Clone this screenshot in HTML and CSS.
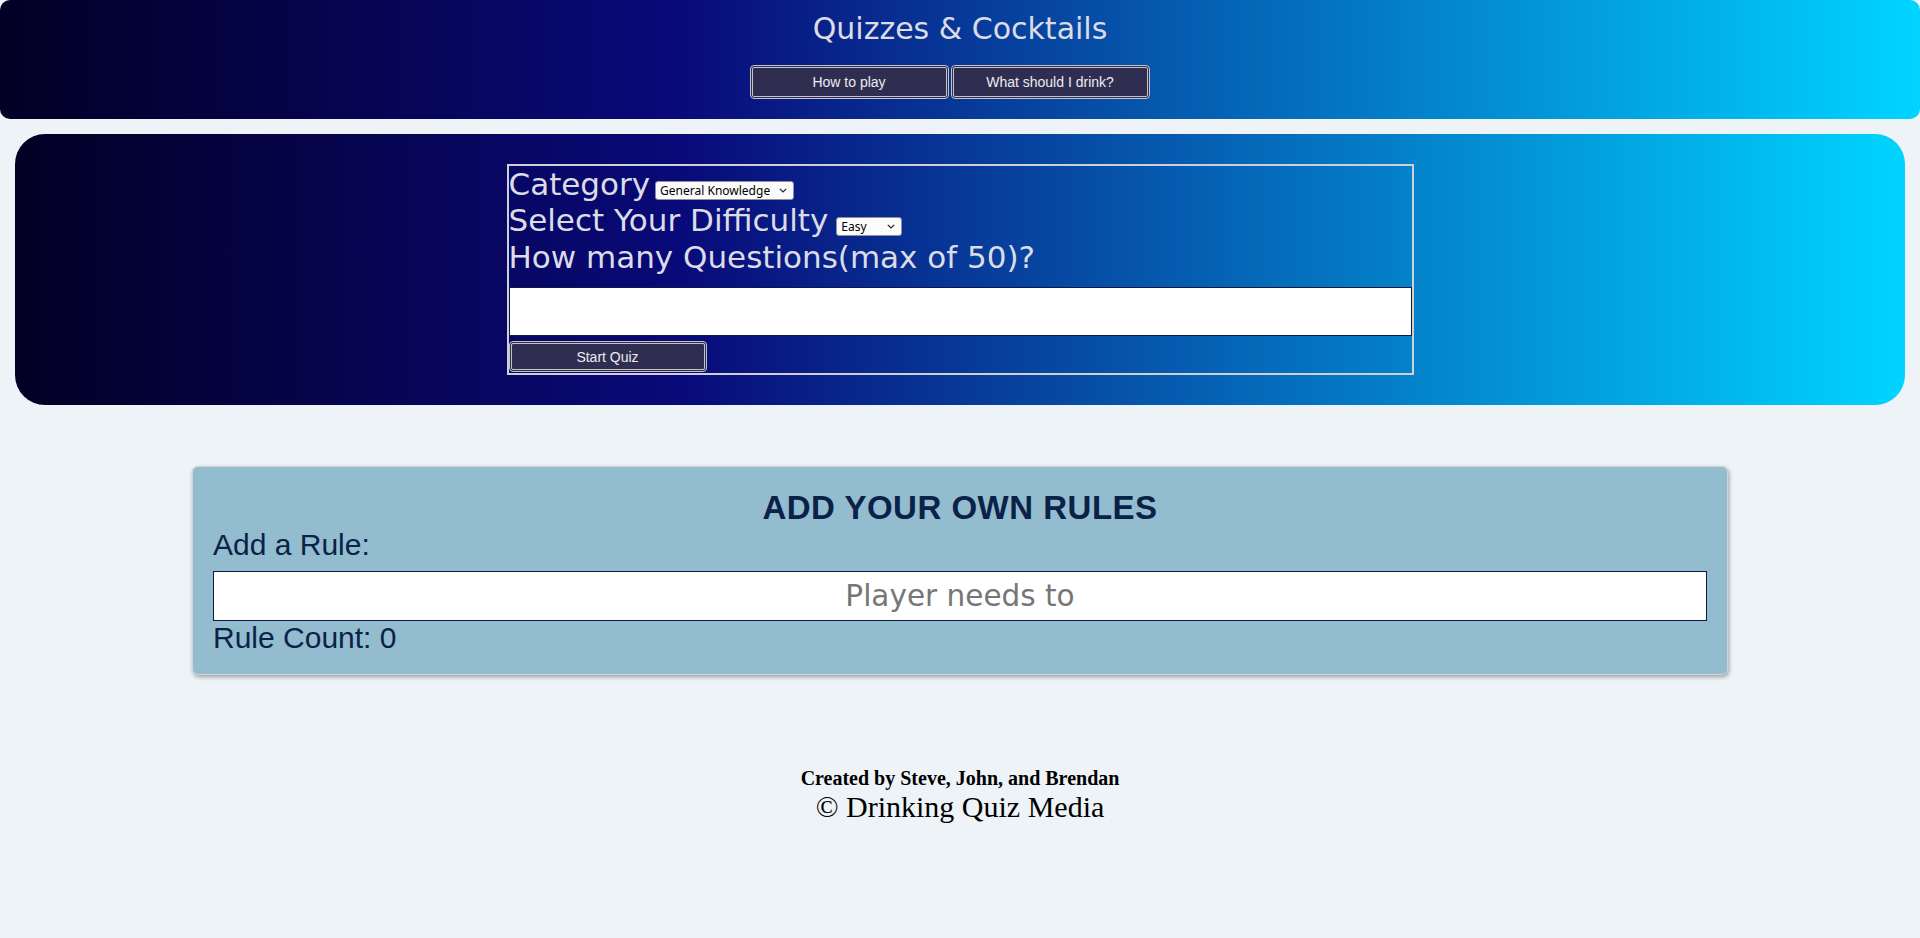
FILE: index.html
```html
<!DOCTYPE html>
<html lang="en">
<head>
<meta charset="utf-8">
<title>Quizzes &amp; Cocktails</title>
<link rel="stylesheet" href="styles.css">
</head>
<body>
<header class="site-header">
  <h1 class="site-title">Quizzes &amp; Cocktails</h1>
  <nav class="nav">
    <button class="btn nav-btn" type="button">How to play</button>
    <button class="btn nav-btn" type="button">What should I drink?</button>
  </nav>
</header>

<main>
  <section class="quiz-panel">
    <form class="quiz-form">
      <div class="row"><label for="cat">Category</label><span class="sel-wrap sel-wrap-cat"><select id="cat" class="sel sel-cat">
          <option>General Knowledge</option>
          <option>Books</option>
          <option>Film</option>
          <option>Music</option>
          <option>Sports</option>
        </select><svg class="chev" width="8" height="5" viewBox="0 0 8 5"><path d="M0.8 0.8 L4 4 L7.2 0.8" fill="none" stroke="#222" stroke-width="1.2"/></svg></span></div>
      <div class="row"><label for="diff">Select Your Difficulty</label><span class="sel-wrap sel-wrap-diff"><select id="diff" class="sel sel-diff">
          <option>Easy</option>
          <option>Medium</option>
          <option>Hard</option>
        </select><svg class="chev" width="8" height="5" viewBox="0 0 8 5"><path d="M0.8 0.8 L4 4 L7.2 0.8" fill="none" stroke="#222" stroke-width="1.2"/></svg></span></div>
      <div class="row row-q"><label for="qty">How many Questions(max of 50)?</label></div>
      <input id="qty" class="qty-input" type="text">
      <button class="btn start-btn" type="button">Start Quiz</button>
    </form>
  </section>

  <section class="rules-card">
    <h2 class="rules-title">ADD YOUR OWN RULES</h2>
    <label class="rules-label" for="rule">Add a Rule:</label>
    <input id="rule" class="rule-input" type="text" placeholder="Player needs to">
    <p class="rule-count">Rule Count: 0</p>
  </section>
</main>

<footer class="site-footer">
  <p class="credits">Created by Steve, John, and Brendan</p>
  <p class="copy">&copy; Drinking Quiz Media</p>
</footer>
</body>
</html>
```

FILE: styles.css
```css
* { box-sizing: border-box; }

body {
  margin: 0;
  background: #eef3f8;
  font-family: "Liberation Sans", Arial, sans-serif;
}

.site-header {
  background: linear-gradient(90deg, rgb(2, 0, 36) 0%, rgb(9, 9, 121) 35%, rgb(0, 212, 255) 100%);
  border-radius: 10px;
  padding: 12px 0 20px;
  text-align: center;
}

.site-title {
  margin: 0;
  font-family: "DejaVu Sans", sans-serif;
  font-weight: normal;
  font-size: 30px;
  line-height: 34px;
  color: #dcdce6;
}

.nav {
  margin-top: 19px;
  padding-right: 21px;
  display: flex;
  justify-content: center;
  gap: 2px;
}

.btn {
  background: #302e50;
  color: #ececf0;
  border: 3px double #c4c4c8;
  border-radius: 4px;
  font-family: "Liberation Sans", Arial, sans-serif;
  font-size: 14px;
  padding: 0;
  cursor: pointer;
}

.nav-btn {
  width: 199px;
  height: 34px;
}

.quiz-panel {
  margin: 15px 15px 0;
  padding: 30px 0 30px;
  border-radius: 30px;
  background: linear-gradient(90deg, rgb(2, 0, 36) 0%, rgb(9, 9, 121) 35%, rgb(0, 212, 255) 100%);
}

.quiz-form {
  width: 907px;
  margin: 0 auto;
  border: 2px solid #d0d0d4;
  padding: 0 0 1px;
  font-family: "DejaVu Sans", sans-serif;
  color: #dcdce6;
}

.row {
  font-size: 31px;
  line-height: 36px;
  white-space: nowrap;
}

.row-q { margin-top: 1px; }

.sel-wrap {
  position: relative;
  display: inline-block;
  vertical-align: baseline;
  font-size: 12px;
  line-height: 19px;
}

.sel-wrap-cat { margin-left: 5px; }
.sel-wrap-diff { margin-left: 8px; }

.sel {
  appearance: none;
  -webkit-appearance: none;
  display: block;
  font-family: "Noto Sans", "DejaVu Sans", sans-serif;
  font-size: 12px;
  height: 19px;
  padding: 0 16px 0 4px;
  background-color: #fbfbfb;
  color: #000;
  border: 1px solid #8f8f9d;
  border-radius: 3px;
}

.sel-cat { width: 139px; }
.sel-diff { width: 66px; }

.chev {
  position: absolute;
  right: 7px;
  top: 7px;
  pointer-events: none;
}

.qty-input {
  display: block;
  width: 100%;
  height: 49px;
  margin-top: 12px;
  border: 1px solid #0a1a44;
  background: #fff;
  font-size: 20px;
}

.start-btn {
  display: block;
  width: 198px;
  height: 31px;
  margin-top: 5px;
}

.rules-card {
  width: 80%;
  margin: 61px auto 0;
  padding: 22px 20px 19px;
  background: #93bccf;
  border: 1px solid #d2d6da;
  border-radius: 6px;
  box-shadow: 1px 2px 4px rgba(0, 0, 0, 0.35);
  color: #0b2248;
}

.rules-title {
  margin: 0;
  text-align: center;
  font-size: 33px;
  line-height: 37px;
  letter-spacing: 0.5px;
  font-weight: bold;
}

.rules-label {
  display: block;
  margin-top: 2px;
  font-size: 30px;
  line-height: 34px;
}

.rule-input {
  display: block;
  width: 100%;
  height: 50px;
  margin-top: 9px;
  border: 1px solid #0a1a44;
  background: #fff;
  text-align: center;
  font-family: "DejaVu Sans", sans-serif;
  font-size: 29.5px;
  color: #333;
}

.rule-input::placeholder { color: #767676; }

.rule-count {
  margin: 0;
  font-size: 30px;
  line-height: 34px;
}

.site-footer {
  margin-top: 92px;
  text-align: center;
  font-family: "Liberation Serif", "Times New Roman", serif;
  color: #000;
}

.credits {
  margin: 0;
  font-size: 20px;
  line-height: 23px;
  font-weight: bold;
}

.copy {
  margin: 0;
  font-size: 30px;
  line-height: 33px;
}
```
